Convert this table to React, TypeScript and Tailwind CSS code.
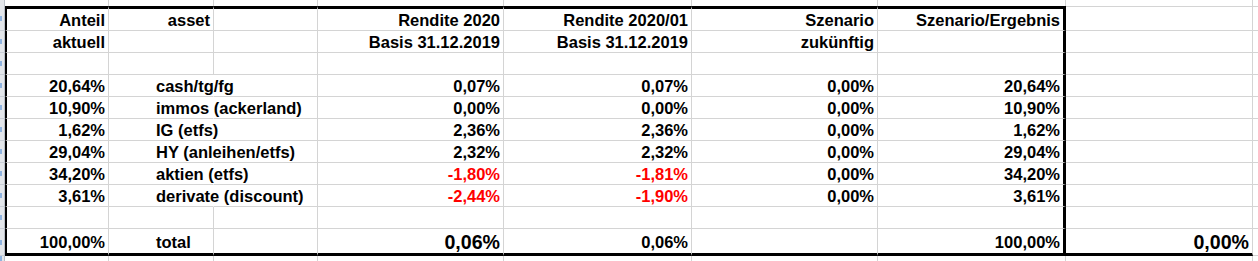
import React from 'react';

type Cell = { t?: string; red?: boolean; big?: boolean; left?: boolean };
type RowKind = 'top' | 'head' | 'body' | 'total' | 'bottom';

const widths = [
  'w-[104px]',
  'w-[105px]',
  'w-[104px]',
  'w-[186px]',
  'w-[188px]',
  'w-[186px]',
  'w-[188px]',
  'w-[187px]',
];

const E: Cell = {};

const rows: { kind: RowKind; cells: Cell[]; overflow?: boolean }[] = [
  { kind: 'top', cells: [E, E, E, E, E, E, E, E] },
  {
    kind: 'head',
    cells: [
      { t: 'Anteil' },
      { t: 'asset' },
      E,
      { t: 'Rendite 2020' },
      { t: 'Rendite 2020/01' },
      { t: 'Szenario' },
      { t: 'Szenario/Ergebnis' },
      E,
    ],
  },
  {
    kind: 'body',
    cells: [
      { t: 'aktuell' },
      E,
      E,
      { t: 'Basis 31.12.2019' },
      { t: 'Basis 31.12.2019' },
      { t: 'zukünftig' },
      E,
      E,
    ],
  },
  { kind: 'body', cells: [E, E, E, E, E, E, E, E] },
  {
    kind: 'body',
    overflow: true,
    cells: [{ t: '20,64%' }, { t: 'cash/tg/fg', left: true }, E, { t: '0,07%' }, { t: '0,07%' }, { t: '0,00%' }, { t: '20,64%' }, E],
  },
  {
    kind: 'body',
    overflow: true,
    cells: [{ t: '10,90%' }, { t: 'immos (ackerland)', left: true }, E, { t: '0,00%' }, { t: '0,00%' }, { t: '0,00%' }, { t: '10,90%' }, E],
  },
  {
    kind: 'body',
    overflow: true,
    cells: [{ t: '1,62%' }, { t: 'IG (etfs)', left: true }, E, { t: '2,36%' }, { t: '2,36%' }, { t: '0,00%' }, { t: '1,62%' }, E],
  },
  {
    kind: 'body',
    overflow: true,
    cells: [{ t: '29,04%' }, { t: 'HY (anleihen/etfs)', left: true }, E, { t: '2,32%' }, { t: '2,32%' }, { t: '0,00%' }, { t: '29,04%' }, E],
  },
  {
    kind: 'body',
    overflow: true,
    cells: [
      { t: '34,20%' },
      { t: 'aktien (etfs)', left: true },
      E,
      { t: '-1,80%', red: true },
      { t: '-1,81%', red: true },
      { t: '0,00%' },
      { t: '34,20%' },
      E,
    ],
  },
  {
    kind: 'body',
    overflow: true,
    cells: [
      { t: '3,61%' },
      { t: 'derivate (discount)', left: true },
      E,
      { t: '-2,44%', red: true },
      { t: '-1,90%', red: true },
      { t: '0,00%' },
      { t: '3,61%' },
      E,
    ],
  },
  { kind: 'body', cells: [E, E, E, E, E, E, E, E] },
  {
    kind: 'total',
    cells: [
      { t: '100,00%' },
      { t: 'total', left: true },
      E,
      { t: '0,06%', big: true },
      { t: '0,06%' },
      E,
      { t: '100,00%' },
      { t: '0,00%', big: true },
    ],
  },
  { kind: 'bottom', cells: [E, E, E, E, E, E, E, E] },
];

const rowHeight: Record<RowKind, string> = {
  top: 'h-[6px]',
  head: 'h-[25px]',
  body: 'h-[22px]',
  total: 'h-[27px]',
  bottom: 'flex-1',
};

function cellClass(kind: RowKind, i: number, overflow?: boolean) {
  const inBox = kind === 'head' || kind === 'body' || kind === 'total';
  const parts: string[] = [widths[i], 'shrink-0 flex items-end whitespace-nowrap'];

  // left edge of the framed block
  if (i === 0 && inBox) parts.push('border-l-2 border-l-black');

  // right side: thick frame after column G, hidden line where text runs over
  if (i === 6 && inBox) parts.push('border-r-[3px] border-r-black');
  else if (i === 1 && overflow) parts.push('border-r border-r-transparent');
  else parts.push('border-r border-r-[#d4d4d4]');

  // top frame
  if (kind === 'head') {
    if (i <= 6) parts.push('border-t-[3px] border-t-black');
    else parts.push('border-t border-t-[#d4d4d4]');
  }

  // bottom lines
  if (kind === 'total') parts.push('border-b-[3px] border-b-black pb-[2px]');
  else if (kind === 'head' || kind === 'body') parts.push('border-b border-b-[#d4d4d4] pb-[1px]');

  return parts.join(' ');
}

function Row({ kind, cells, overflow }: { kind: RowKind; cells: Cell[]; overflow?: boolean }) {
  const hasMark = kind !== 'top';
  return (
    <div className={`flex ${rowHeight[kind]}`}>
      {/* row header strip, cut off at the left edge */}
      <div
        className={`w-[5px] shrink-0 bg-[#e3e6ea] border-r border-r-[#b9bec6] flex items-center ${
          kind === 'top' || kind === 'bottom' ? '' : 'border-b border-b-[#c9ced6]'
        }`}
      >
        {hasMark && <div className="w-[2px] h-[5px] bg-[#8fb3df]" />}
      </div>
      {cells.map((c, i) => (
        <div key={i} className={cellClass(kind, i, overflow)}>
          {c.t && (
            <span
              className={`w-full leading-[18px] ${c.left ? 'pl-[47px]' : 'text-right pr-[3px]'} ${
                c.big ? 'text-[19.6px]' : 'text-[16.5px]'
              } ${c.red ? 'text-[#ff0000]' : 'text-black'}`}
            >
              {c.t}
            </span>
          )}
        </div>
      ))}
      <div
        className={`flex-1 ${kind === 'top' || kind === 'bottom' ? '' : 'border-b border-b-[#d4d4d4]'} ${
          kind === 'head' ? 'border-t border-t-[#d4d4d4]' : ''
        }`}
      />
    </div>
  );
}

export default function App() {
  return (
    <div className="w-[1258px] h-[261px] overflow-hidden bg-white flex flex-col font-['Liberation_Sans',Arial,sans-serif] font-bold">
      {rows.map((r, i) => (
        <Row key={i} kind={r.kind} cells={r.cells} overflow={r.overflow} />
      ))}
    </div>
  );
}
